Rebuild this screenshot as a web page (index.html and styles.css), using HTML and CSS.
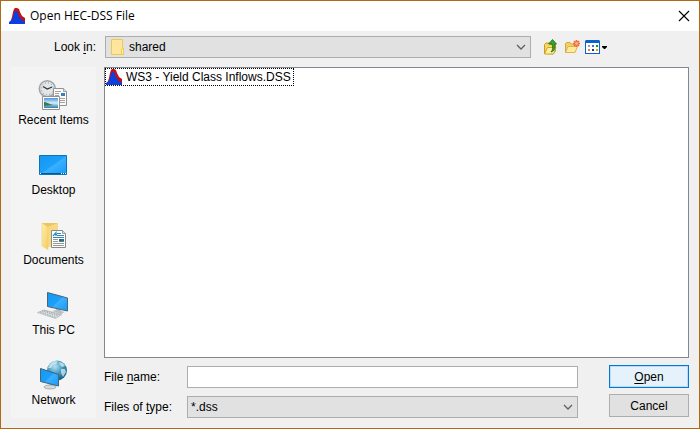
FILE: index.html
```html
<!DOCTYPE html>
<html lang="en">
<head>
	<meta charset="UTF-8">
	<title>Open HEC-DSS File</title>
	<link rel="stylesheet" href="styles.css">
</head>
<body>
	<svg class="defs" aria-hidden="true">
		<defs>
			<symbol id="dss" viewBox="0 0 16 16">
				<path fill="#c01018" d="M0 16L2 12L3 9L4 4L5 1L6 0H8L10 1L11 4L13 8L16 10V16z"/>
				<path fill="#0b3fe0" d="M0 16V14L3 12L4 9L5 5L6 3H8L9 6L11 10L13 12L16 14V16z"/>
			</symbol>
			<symbol id="arrow" viewBox="0 0 10 6">
				<path fill="none" stroke="#606060" stroke-width="1.3" d="M1 1L5 5L9 1"/>
			</symbol>
			<linearGradient id="blue" x1="0" y1="0" x2="1" y2="1">
				<stop offset="0" stop-color="#1697f0"/>
				<stop offset=".5" stop-color="#1ca0fb"/>
				<stop offset=".52" stop-color="#3cb0ff"/>
				<stop offset="1" stop-color="#169bf8"/>
			</linearGradient>
			<linearGradient id="yellow" x1="0" y1="0" x2="1" y2="1">
				<stop offset="0" stop-color="#fff0b0"/>
				<stop offset="1" stop-color="#f5cb5c"/>
			</linearGradient>
			<linearGradient id="photo" x1="0" y1="0" x2="0" y2="1">
				<stop offset="0" stop-color="#4a94df"/>
				<stop offset=".5" stop-color="#d5edfb"/>
				<stop offset="1" stop-color="#2c7db0"/>
			</linearGradient>
			<radialGradient id="globe" cx=".4" cy=".3" r=".7">
				<stop offset="0" stop-color="#b9e1f0"/>
				<stop offset=".5" stop-color="#4b9dc2"/>
				<stop offset="1" stop-color="#175f86"/>
			</radialGradient>
		</defs>
	</svg>

	<header class="titlebar">
		<svg class="icon"><use href="#dss"/></svg>
		<h1>Open HEC-DSS File</h1>
		<button class="close" type="button" aria-label="Close">
			<svg width="12" height="12" viewBox="0 0 12 12"><path fill="none" stroke="#000" stroke-width="1.1" d="M1 1L11 11M11 1L1 11"/></svg>
		</button>
	</header>

	<form class="dialog">
		<label class="lookin" for="lookin">Look <u>i</u>n:</label>
		<div class="toolbar">
			<div class="combo has-icon">
				<select id="lookin"><option>shared</option></select>
				<svg class="folder" width="14" height="16" viewBox="0 0 14 16">
					<path fill="#ffe69a" stroke="#efc84e" d="M.5.5H11.5V9.5H12.5V15.5H.5z"/>
					<path fill="#fff0b5" stroke="#efc84e" d="M10.5 15.5V10L11.5 9.5H12.5V15.5z"/>
				</svg>
				<svg class="arrow"><use href="#arrow"/></svg>
			</div>
			<div class="tools">
				<button type="button" aria-label="Up One Level">
					<svg width="16" height="16" viewBox="0 0 16 16">
						<path fill="#f6d667" stroke="#c99b20" d="M1.5 14.5V5.5L3 4H6L7 5.500H12.5V12L10 15z"/>
						<path fill="#ffefa5" stroke="#d1a42b" d="M1.5 15L4.5 8.5H13L10.5 15z"/>
						<path fill="#35a52e" stroke="#12701a" stroke-width=".8" d="M8 13C10 11 10 8 9 5H5.5L9.5.5L13.5 5H11.5C12.5 9 11.5 12 8 13z"/>
					</svg>
				</button>
				<button type="button" aria-label="Create New Folder">
					<svg width="16" height="16" viewBox="0 0 16 16">
						<path fill="#f3d06a" stroke="#d4a53c" d="M1.5 13.5V4.5L2.5 3.5H6L7 5H11.5V12z"/>
						<path fill="#ffec9c" stroke="#dfb24a" d="M1.5 13.5L4 7.5H13.5L11 13.5z"/>
						<path stroke="#f16a3b" stroke-width="1.6" d="M12.5 1V8M9 4.5H16M10 2L15 7M15 2L10 7"/>
						<circle cx="12.5" cy="4.5" r="1.4" fill="#ffb28a"/>
					</svg>
				</button>
				<button type="button" aria-label="View Menu">
					<svg width="22" height="16" viewBox="0 0 22 16">
						<path fill="#0b61ce" d="M1 1H14L15 2V15H0V2z"/>
						<path fill="#fff" d="M1 4H14V14H1z"/>
						<path fill="#9c9cae" d="M3 6H5V8H3z"/>
						<path fill="#2c78df" d="M7 6H9V8H7z"/>
						<path fill="#149020" d="M11 6H13V8H11z"/>
						<path fill="#f37b5c" d="M3 10H5V12H3z"/>
						<path fill="#16348c" d="M7 10H9V12H7z"/>
						<path fill="#d2a21c" d="M11 10H13V12H11z"/>
						<path fill="#000" d="M17 7H22V8L20 10H19L17 8z"/>
					</svg>
				</button>
			</div>
		</div>

		<nav class="places">
			<button type="button">
				<svg viewBox="0 0 33 32">
					<circle cx="10.3" cy="9.7" r="8" fill="#e2e6e8" stroke="#a0a6a9" stroke-width="1.6"/>
					<circle cx="10.3" cy="9.7" r="6" fill="none" stroke="#777" stroke-dasharray=".8 2.34"/>
					<path fill="none" stroke="#333" stroke-width="1.2" d="M6 7.5L10.3 10L15 8"/>
					<path fill="#fafafa" stroke="#929292" d="M16.5 9.5H26.5L29.5 12.5V26.5H16.5z"/>
					<path fill="#ddd" stroke="#929292" stroke-width=".8" d="M26.5 9.5V12.5H29.5"/>
					<path stroke="#a3a3a3" d="M18 12.5H24M18 14.5H22M18 16.5H22M23 19.5H28M23 21.5H28M23 23.5H28"/>
					<path fill="#3b7eb8" d="M24 14H28V17H24z"/>
					<path fill="#fff" stroke="#929292" d="M5.5 17.5H22.5V30.5H5.5z"/>
					<path fill="url(#photo)" d="M7 19H21V29H7z"/>
					<path fill="#397d4d" d="M7 23C10 23 12 25.5 17 26L7 27z"/>
				</svg>
				<span>Recent Items</span>
			</button>
			<button type="button">
				<svg viewBox="0 0 33 32">
					<path fill="url(#blue)" stroke="#0b74b5" d="M2.5 6.5H29.5V25.5H2.5z"/>
					<path fill="#07588d" d="M3 24H29V25H3z"/>
					<path fill="#fff" d="M3 24H4V25H3zM24 24H25V25H24zM26 24H27V25H26zM28 24H29V25H28z"/>
				</svg>
				<span>Desktop</span>
			</button>
			<button type="button">
				<svg viewBox="0 0 33 32">
					<path fill="#edc45e" d="M5 4H21V26L10 28L5 26z"/>
					<path fill="#f7d983" d="M10 8L21 4V27H10z"/>
					<path fill="url(#yellow)" stroke="#edcb71" stroke-width=".5" d="M5 4L11 8V30.5L5 27z"/>
					<path fill="#fff" stroke="#888" d="M14.5 11.5H25.5L28.5 14.5V28.5H14.5z"/>
					<path fill="#ddd" stroke="#888" stroke-width=".8" d="M25.5 11.5V14.5H28.5"/>
					<path fill="none" stroke="#278ec5" stroke-width="1.2" d="M16 17L19 13.5V17M17 15.5H20"/>
					<path stroke="#3289b8" d="M20 14.5H24M20 16.5H27M16 18.5H27"/>
					<path stroke="#999" d="M16 20.5H21M16 22.5H21M16 24.5H27M16 26.5H27"/>
					<path fill="#27699d" d="M22 20H27V23H22z"/>
					<path fill="#59905c" d="M22 22H27V23H22z"/>
				</svg>
				<span>Documents</span>
			</button>
			<button type="button">
				<svg viewBox="0 0 33 32">
					<path fill="#b9c0c4" d="M19 19L24 20V22L28 23L24 25L15 22L19 21z"/>
					<path fill="url(#blue)" stroke="#4b6577" d="M10.5 3.5L30.5 9V22L10.5 17.5z"/>
					<path fill="#dbe0e3" stroke="#abb2b7" stroke-width=".7" d="M.5 23.5L7 21L25 25.5L18.5 29.5z"/>
					<path fill="none" stroke="#929ba1" stroke-width=".8" stroke-dasharray="1.5 1" d="M5 22L21 27M3 23L19 28.5M7 21.5L23 26"/>
				</svg>
				<span>This PC</span>
			</button>
			<button type="button">
				<svg viewBox="0 0 33 32">
					<circle cx="20" cy="11.5" r="10" fill="url(#globe)"/>
					<path fill="#d5edf4" d="M13 5L17 2L21 2.5L19 5L16 6L14 9L11 9zM22 3L26 4L28 7L25 8L23 6zM24 10L28 10L29 13L26 18L24 14z" opacity=".75"/>
					<path fill="#bcc5ca" d="M12 24H15V27H12z"/>
					<ellipse cx="13" cy="28" rx="6" ry="2" fill="#d5dadd" stroke="#8f999f" stroke-width=".7"/>
					<path fill="url(#blue)" stroke="#416579" d="M3.5 9.5L21.5 15.5V27L3.5 22.5z"/>
				</svg>
				<span>Network</span>
			</button>
		</nav>

		<ul class="files">
			<li tabindex="0"><svg class="icon"><use href="#dss"/></svg>WS3 - Yield Class Inflows.DSS</li>
		</ul>

		<div class="footer">
			<div class="fields">
				<label for="filename">File <u>n</u>ame:</label>
				<input id="filename" type="text">
				<label for="filetype">Files of <u>t</u>ype:</label>
				<div class="combo">
					<select id="filetype"><option>*.dss</option></select>
					<svg class="arrow"><use href="#arrow"/></svg>
				</div>
			</div>
			<div class="actions">
				<button class="primary" type="button"><u>O</u>pen</button>
				<button type="button">Cancel</button>
			</div>
		</div>
	</form>
</body>
</html>
```
FILE: styles.css
```css
*{box-sizing:border-box;margin:0;padding:0;}
body{
	display:flex;
	flex-direction:column;
	min-height:100vh;
	border:1px solid #b06a14;
	background:#f0f0f0;
	color:#000;
	font:12px/16px "Liberation Sans",Arial,sans-serif;
}
button,input,select{
	font:inherit;
	color:inherit;
}
u{
	text-underline-offset:2px;
}
svg{
	display:block;
}
.defs{
	position:absolute;
	width:0;
	height:0;
}
.icon{
	flex:none;
	width:16px;
	height:16px;
}

/* title bar */
.titlebar{
	display:flex;
	align-items:center;
	gap:5px;
	height:30px;
	padding:0 9px 0 8px;
	background:#fff;
}
.titlebar h1{
	flex:1;
	font:12px/16px "Open Sans","Segoe UI",sans-serif;
}
.close{
	border:0;
	background:none;
}

.dialog{
	flex:1;
	display:grid;
	grid-template-columns:85px 1fr;
	grid-template-rows:22px 1fr auto;
	gap:9px 8px;
	padding:5px 10px 10px;
}
.lookin{
	align-self:center;
	text-align:right;
}
.toolbar{
	display:flex;
	padding-left:1px;
}
.toolbar .combo{
	flex:1;
}
.tools{
	display:flex;
	align-items:center;
	gap:5px;
	width:158px;
	padding-left:12px;
}
.tools button{
	border:0;
	background:none;
}

/* drop-downs, icon and arrow share the cell of the select */
.combo{
	display:grid;
	grid-template-columns:1fr;
	align-items:center;
	height:22px;
}
.combo > *{
	grid-area:1/1;
}
.combo select{
	appearance:none;
	width:100%;
	height:22px;
	padding:0 24px 0 3px;
	border:1px solid #adadad;
	border-radius:0;
	background:#e1e1e1;
}
.has-icon select{
	padding-left:23px;
}
.combo svg{
	pointer-events:none;
}
.folder{
	margin-left:6px;
}
.arrow{
	justify-self:end;
	width:10px;
	height:6px;
	margin-right:5px;
}

/* shortcuts on the left */
.places{
	grid-row:2/4;
	background:#f4f4f4;
}
.places button{
	display:flex;
	flex-direction:column;
	align-items:center;
	gap:1px;
	width:100%;
	height:70px;
	padding-top:12px;
	border:0;
	background:none;
}
.places svg{
	width:33px;
	height:32px;
}

.files{
	list-style:none;
	border:1px solid #828790;
	background:#fff;
}
.files li{
	display:flex;
	align-items:center;
	gap:4px;
	width:fit-content;
	height:18px;
	padding-right:2px;
	border:1px dotted #000;
}

.footer{
	display:flex;
	gap:31px;
	margin-top:-2px;
}
.fields{
	flex:1;
	display:grid;
	grid-template-columns:75px 1fr;
	grid-auto-rows:22px;
	align-items:center;
	gap:8px;
	padding-top:1px;
}
.fields input{
	width:100%;
	height:22px;
	padding:0 3px;
	border:1px solid #adadad;
	background:#fff;
}
.actions{
	display:flex;
	flex-direction:column;
	gap:6px;
	width:80px;
}
.actions button{
	height:23px;
	border:1px solid #adadad;
	background:#e1e1e1;
}
.actions .primary{
	border-color:#0078d7;
	background:#e5f1fb;
	box-shadow:inset 0 0 0 1px #bddcf4;
}
```
